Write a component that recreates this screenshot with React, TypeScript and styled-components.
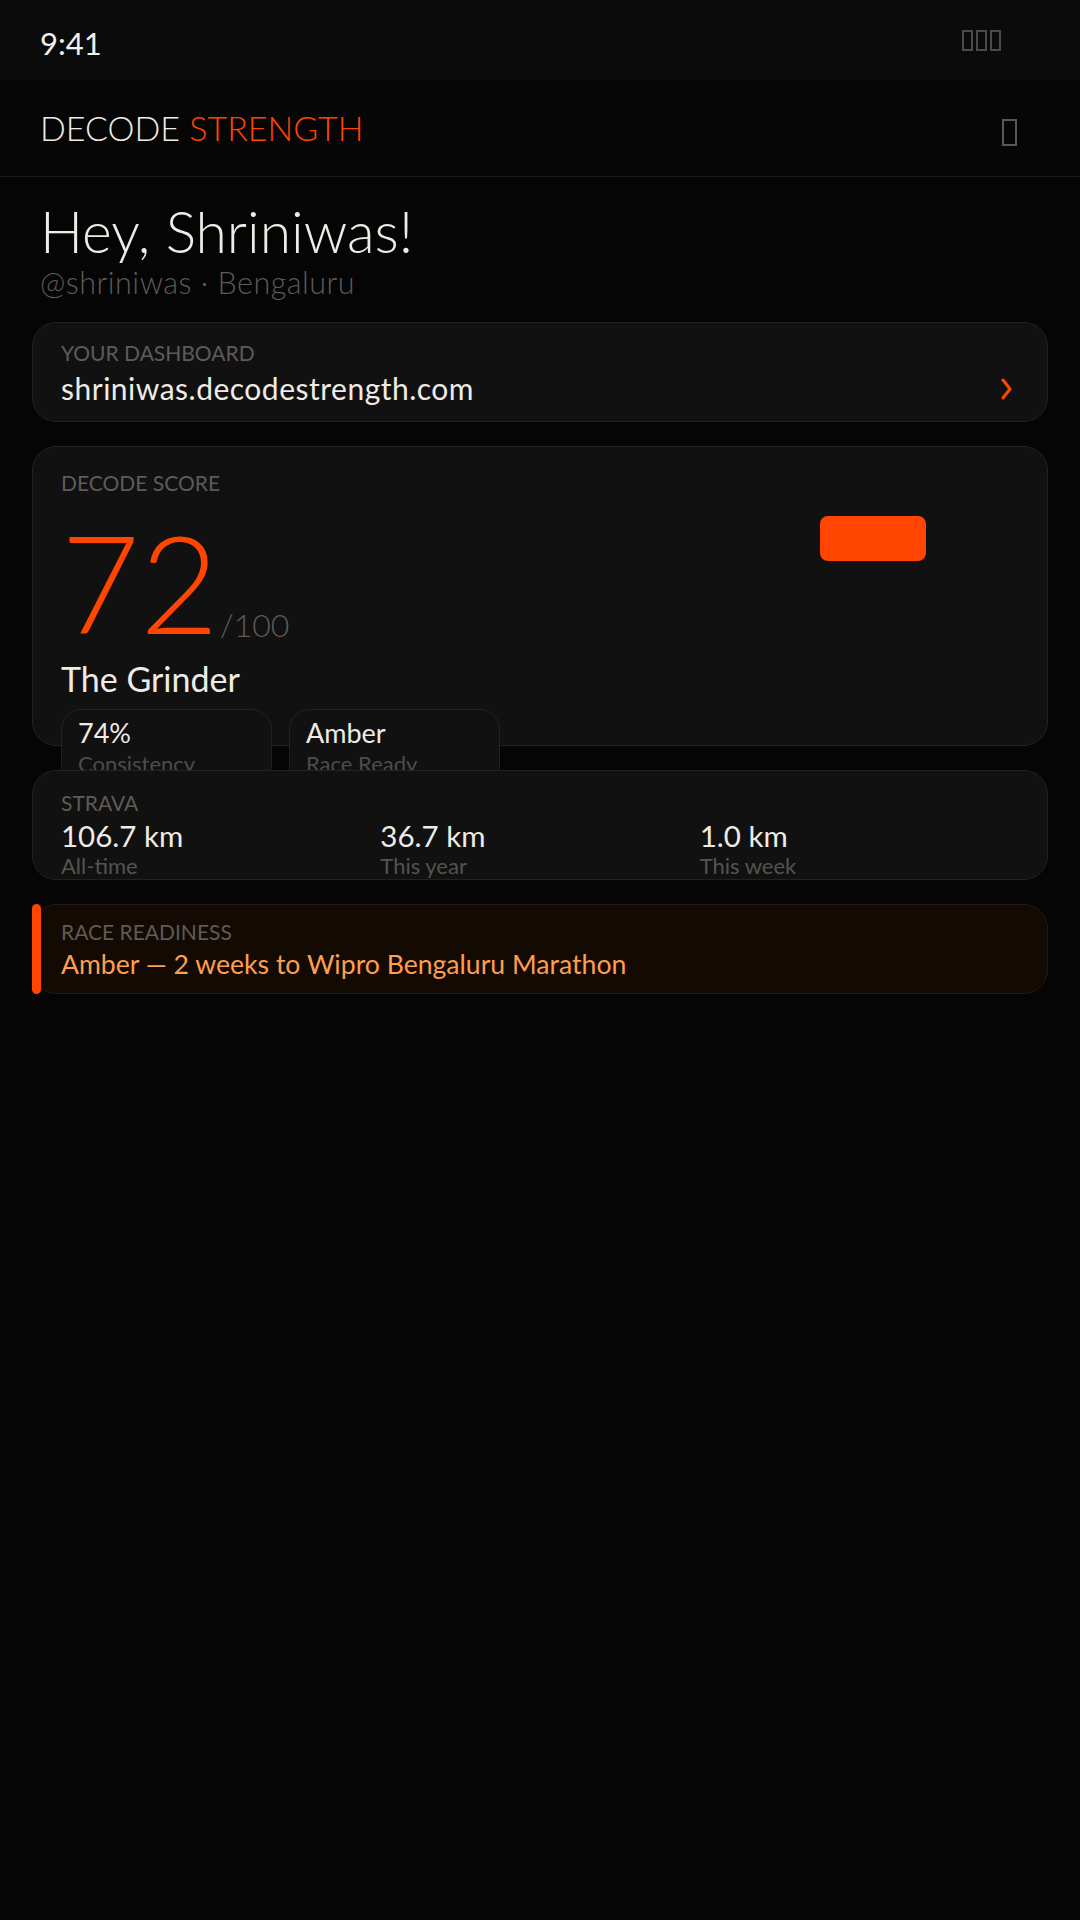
import styled, { createGlobalStyle } from "styled-components";

const GlobalStyle = createGlobalStyle`
  * {
    box-sizing: border-box;
  }
  body {
    margin: 0;
    background: #050505;
    font-family: "Lato", "Open Sans", sans-serif;
    color: #efebe5;
  }
`;

const ORANGE = "#ff4500";

const Page = styled.div`
  min-height: 1920px;
  background: #050505;
`;

const StatusBar = styled.div`
  height: 80px;
  background: #0b0b0b;
  display: flex;
  align-items: center;
  justify-content: space-between;
  padding: 0 79px 0 40px;
`;

const Time = styled.span`
  font-size: 31px;
  line-height: 36px;
  margin-top: 6px;
  color: #f2f0ec;
`;

const TofuRow = styled.div`
  display: flex;
  gap: 3px;
`;

// missing-glyph boxes, drawn as the reference shows them
const Tofu = styled.span<{ w: number; h: number }>`
  display: block;
  width: ${(p) => p.w}px;
  height: ${(p) => p.h}px;
  border: 2px solid #4d4b48;
`;

const Header = styled.header`
  height: 97px;
  background: #060606;
  border-bottom: 1px solid #1b1b1b;
  display: flex;
  align-items: center;
  justify-content: space-between;
  padding: 0 63px 0 40px;
`;

const Brand = styled.div`
  font-size: 34px;
  line-height: 40px;
  font-weight: 300;
  color: #efebe5;

  span {
    color: ${ORANGE};
  }
`;

const MenuTofu = styled(Tofu)`
  margin-top: 9px;
  border-color: #595653;
`;

const Main = styled.main`
  display: flex;
  flex-direction: column;
  gap: 24px;
  padding: 23px 32px 0;
`;

const Greeting = styled.section`
  padding: 0 8px;
`;

const Hello = styled.h1`
  margin: 0;
  font-size: 57px;
  line-height: 62px;
  font-weight: 300;
  color: #efebe5;
`;

const Handle = styled.div`
  margin-top: 4px;
  font-size: 30.5px;
  line-height: 32px;
  font-weight: 300;
  letter-spacing: 0.5px;
  color: #5e5a55;
`;

const Card = styled.div<{ h?: number }>`
  background: #111111;
  border: 1px solid #222222;
  border-radius: 24px;
  padding: 18px 28px 17px;
  ${(p) => (p.h ? `height: ${p.h}px;` : "")}
`;

const Label = styled.div`
  font-size: 21px;
  line-height: 24px;
  text-transform: uppercase;
  color: #5f5b57;
`;

const LinkRow = styled.div`
  margin-top: 7px;
  display: flex;
  align-items: center;
  justify-content: space-between;
`;

const Url = styled.div`
  font-size: 30px;
  line-height: 32px;
  letter-spacing: 0.5px;
  color: #efebe5;
`;

const Chevron = styled.svg`
  width: 12px;
  height: 22px;
  margin-right: 6px;
  margin-top: 2px;
`;

const ScoreCard = styled(Card)`
  padding-top: 24px;
`;

const ScoreRow = styled.div`
  margin-top: 19px;
  display: flex;
  align-items: flex-start;
  justify-content: space-between;
`;

const ScoreValue = styled.div`
  display: flex;
  align-items: baseline;
`;

const Big = styled.span`
  font-size: 136px;
  line-height: 136px;
  font-weight: 300;
  color: ${ORANGE};
`;

const OutOf = styled.span`
  margin-left: 1px;
  font-size: 32px;
  line-height: 36px;
  font-weight: 300;
  color: #5f5b57;
  position: relative;
  top: 3px;
`;

const Archetype = styled.div`
  margin-top: 9px;
  font-size: 34px;
  line-height: 40px;
  color: #efebe5;
`;

const Chips = styled.div`
  margin-top: 10px;
  display: flex;
  gap: 17px;
`;

const Chip = styled.div`
  width: 211px;
  padding: 8px 16px;
  background: #111111;
  border: 1px solid #222222;
  border-radius: 20px;
`;

const ChipValue = styled.div`
  font-size: 27px;
  line-height: 30px;
  color: #efebe5;
`;

const ChipLabel = styled.div`
  margin-top: 3px;
  font-size: 22px;
  line-height: 26px;
  color: #4f4c48;
`;

const Badge = styled.div`
  width: 106px;
  height: 45px;
  margin: 2px 93px 0 0;
  border-radius: 8px;
  background: ${ORANGE};
`;

const StravaCard = styled(Card)`
  padding-top: 20px;
`;

const StatGrid = styled.div`
  margin-top: 5px;
  display: grid;
  grid-template-columns: repeat(3, 1fr);
`;

const StatValue = styled.div`
  font-size: 29.5px;
  line-height: 32px;
  color: #efebe5;
`;

const StatLabel = styled.div`
  margin-top: 2px;
  font-size: 22px;
  line-height: 24px;
  color: #56534f;
`;

const RaceCard = styled(Card)`
  position: relative;
  background: #130a04;
  border-color: #27190f;
  padding-top: 15px;

  &::before {
    content: "";
    position: absolute;
    left: -1px;
    top: -1px;
    bottom: -1px;
    width: 9px;
    border-radius: 5px;
    background: ${ORANGE};
  }
`;

const RaceText = styled.div`
  margin-top: 5px;
  font-size: 26.6px;
  line-height: 30px;
  color: #ff9f4d;
`;

const stats = [
  { value: "106.7 km", label: "All-time" },
  { value: "36.7 km", label: "This year" },
  { value: "1.0 km", label: "This week" },
];

export default function App() {
  return (
    <Page>
      <GlobalStyle />
      <StatusBar>
        <Time>9:41</Time>
        <TofuRow>
          <Tofu w={11} h={21} />
          <Tofu w={11} h={21} />
          <Tofu w={11} h={21} />
        </TofuRow>
      </StatusBar>

      <Header>
        <Brand>
          DECODE <span>STRENGTH</span>
        </Brand>
        <MenuTofu w={15} h={27} />
      </Header>

      <Main>
        <Greeting>
          <Hello>Hey, Shriniwas!</Hello>
          <Handle>@shriniwas · Bengaluru</Handle>
        </Greeting>

        <Card h={100}>
          <Label>Your Dashboard</Label>
          <LinkRow>
            <Url>shriniwas.decodestrength.com</Url>
            <Chevron viewBox="0 0 12 22">
              <polyline
                points="2,2 9,11 2,20"
                fill="none"
                stroke={ORANGE}
                strokeWidth="3"
                strokeLinecap="round"
                strokeLinejoin="round"
              />
            </Chevron>
          </LinkRow>
        </Card>

        <ScoreCard h={300}>
          <Label>Decode Score</Label>
          <ScoreRow>
            <div>
              <ScoreValue>
                <Big>72</Big>
                <OutOf>/100</OutOf>
              </ScoreValue>
              <Archetype>The Grinder</Archetype>
              <Chips>
                <Chip>
                  <ChipValue>74%</ChipValue>
                  <ChipLabel>Consistency</ChipLabel>
                </Chip>
                <Chip>
                  <ChipValue>Amber</ChipValue>
                  <ChipLabel>Race Ready</ChipLabel>
                </Chip>
              </Chips>
            </div>
            <Badge />
          </ScoreRow>
        </ScoreCard>

        <StravaCard h={110}>
          <Label>Strava</Label>
          <StatGrid>
            {stats.map((s) => (
              <div key={s.label}>
                <StatValue>{s.value}</StatValue>
                <StatLabel>{s.label}</StatLabel>
              </div>
            ))}
          </StatGrid>
        </StravaCard>

        <RaceCard h={90}>
          <Label>Race Readiness</Label>
          <RaceText>Amber — 2 weeks to Wipro Bengaluru Marathon</RaceText>
        </RaceCard>
      </Main>
    </Page>
  );
}
